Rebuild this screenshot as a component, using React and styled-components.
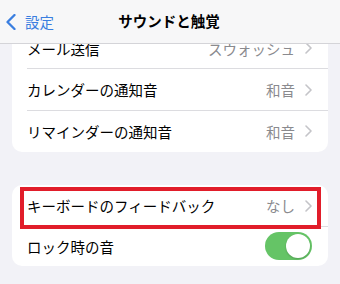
import styled, { createGlobalStyle } from "styled-components";

const GlobalStyle = createGlobalStyle`
    html, body {
        margin: 0;
        padding: 0;
        background: #f2f2f7;
    }
    body {
        font-family: "Noto Sans CJK JP", "Noto Sans", sans-serif;
        -webkit-font-smoothing: antialiased;
    }
`;

const Screen = styled.div`
    position: relative;
    width: 340px;
    height: 284px;
    overflow: hidden;
    background: #f2f2f7;
`;
const NavBar = styled.div`
    position: absolute;
    top: 0;
    left: 0;
    right: 0;
    height: 44px;
    z-index: 2;
    display: flex;
    align-items: center;
    justify-content: center;
    background: rgba(247, 247, 248, 0.97);
    border-bottom: 1px solid #d4d4d8;
    box-sizing: border-box;
`;
const BackButton = styled.div`
    position: absolute;
    left: 6px;
    top: 0;
    height: 100%;
    display: flex;
    align-items: center;
    gap: 9px;
    color: #3a7ee0;
    font-size: 14.5px;
    svg {
        display: block;
    }
`;
const Title = styled.div`
    font-size: 14.5px;
    font-weight: 700;
    color: #000;
    margin-top: -2px;
    margin-left: -2px;
`;
const Content = styled.div`
    padding-top: 27.5px;
    display: flex;
    flex-direction: column;
    gap: 33px;
`;
const Card = styled.div`
    margin: 0 12px;
    background: #fff;
    border-radius: 10px;
    overflow: hidden;
`;
const Row = styled.div`
    position: relative;
    height: ${(props) => props.h || 41.5}px;
    display: flex;
    align-items: center;
    padding: 0 16px 0 15px;
    box-sizing: border-box;
    &:not(:last-child)::after {
        content: "";
        position: absolute;
        left: 15px;
        right: 0;
        bottom: 0;
        height: 1px;
        background: #dcdce0;
    }
`;
const Highlight = styled.div`
    position: absolute;
    left: 8px;
    right: 7px;
    top: 2px;
    bottom: -2px;
    border: 4px solid #e11d2a;
    z-index: 1;
    pointer-events: none;
`;
const Label = styled.span`
    flex: 1;
    font-size: 14.5px;
    color: #000;
    white-space: nowrap;
`;
const Value = styled.span`
    font-size: 14.5px;
    color: #8a8a8e;
    margin-right: 10px;
    white-space: nowrap;
`;
const Toggle = styled.div`
    width: 47px;
    height: 28px;
    border-radius: 14px;
    background: ${(props) => (props.on ? "#65c466" : "#e9e9eb")};
    position: relative;
    &::after {
        content: "";
        position: absolute;
        top: 2px;
        left: ${(props) => (props.on ? "21px" : "2px")};
        width: 24px;
        height: 24px;
        border-radius: 50%;
        background: #fff;
        box-shadow: 0 1px 2px rgba(0, 0, 0, 0.2);
    }
`;

function Chevron() {
    return (
        <svg width="7" height="12" viewBox="0 0 7 12">
            <path
                d="M1 1 L6 6 L1 11"
                fill="none"
                stroke="#c4c4c8"
                strokeWidth="1.6"
                strokeLinecap="round"
                strokeLinejoin="round"
            />
        </svg>
    );
}

function BackChevron() {
    return (
        <svg width="10" height="16" viewBox="0 0 10 16">
            <path
                d="M8.5 1 L1.5 8 L8.5 15"
                fill="none"
                stroke="#3a7ee0"
                strokeWidth="2.3"
                strokeLinecap="round"
                strokeLinejoin="round"
            />
        </svg>
    );
}

function LinkRow({ label, value, highlight }) {
    return (
        <Row>
            {highlight && <Highlight />}
            <Label>{label}</Label>
            <Value>{value}</Value>
            <Chevron />
        </Row>
    );
}

export default function App() {
    return (
        <Screen>
            <GlobalStyle />
            <NavBar>
                <BackButton>
                    <BackChevron />
                    <span>設定</span>
                </BackButton>
                <Title>サウンドと触覚</Title>
            </NavBar>
            <Content>
                <Card>
                    <LinkRow label="メール送信" value="スウォッシュ" />
                    <LinkRow label="カレンダーの通知音" value="和音" />
                    <LinkRow label="リマインダーの通知音" value="和音" />
                </Card>
                <Card>
                    <LinkRow label="キーボードのフィードバック" value="なし" highlight />
                    <Row h={39.5}>
                        <Label>ロック時の音</Label>
                        <Toggle on />
                    </Row>
                </Card>
            </Content>
        </Screen>
    );
}
